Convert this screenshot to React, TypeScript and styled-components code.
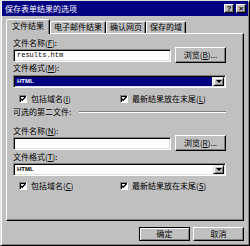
import React from 'react';
import styled, { createGlobalStyle } from 'styled-components';

const GlobalStyle = createGlobalStyle`
  html, body {
    margin: 0;
    padding: 0;
    background: #c0c0c0;
  }
  body {
    font-family: "Noto Sans CJK SC", "Liberation Sans", sans-serif;
    font-size: 8px;
    color: #000;
  }
`;

const Window = styled.div`
  width: 250px;
  height: 246px;
  box-sizing: border-box;
  background: #c0c0c0;
  border: 1px solid;
  border-color: #dfdfdf #000 #000 #dfdfdf;
  box-shadow: inset 1px 1px #fff, inset -1px -1px #808080;
  padding: 0 1px 2px 1px;
  display: flex;
  flex-direction: column;
`;

const TitleBar = styled.div`
  height: 15px;
  background: #000080;
  color: #fff;
  display: flex;
  align-items: center;
  padding: 0 2px 0 3px;
  line-height: 10px;
`;

const TitleText = styled.span`
  flex: 1;
`;

const TitleButton = styled.div`
  width: 10px;
  height: 9px;
  box-sizing: border-box;
  background: #c0c0c0;
  border: 1px solid;
  border-color: #fff #000 #000 #fff;
  box-shadow: inset -1px -1px #808080;
  margin-left: 2px;
  display: flex;
  align-items: center;
  justify-content: center;
  color: #000;
  font-family: "Liberation Sans", sans-serif;
  font-weight: bold;
  font-size: 8px;
  line-height: 7px;
`;

const Content = styled.div`
  padding: 3px 4px 0 4px;
  display: flex;
  flex-direction: column;
`;

const TabRow = styled.div`
  display: flex;
  align-items: flex-end;
  height: 14px;
  position: relative;
  z-index: 1;
`;

const Tab = styled.div<{ $active?: boolean }>`
  box-sizing: border-box;
  height: ${({ $active }) => ($active ? '15px' : '12px')};
  margin-bottom: ${({ $active }) => ($active ? '-1px' : '0')};
  padding: 0 ${({ $active }) => ($active ? '5px' : '3px')};
  padding-top: ${({ $active }) => ($active ? '1px' : '0')};
  background: #c0c0c0;
  border: 1px solid;
  border-bottom: none;
  border-color: #fff #000 transparent #fff;
  border-radius: 2px 2px 0 0;
  box-shadow: inset -1px 0 #808080;
  line-height: 10px;
  white-space: nowrap;
`;

const Panel = styled.div`
  height: 188px;
  box-sizing: border-box;
  border: 1px solid;
  border-color: #fff #000 #000 #fff;
  box-shadow: inset -1px -1px #808080;
  padding: 0 17px 0 6px;
  display: flex;
  flex-direction: column;
`;

const Label = styled.div<{ $top: number }>`
  margin-top: ${({ $top }) => $top}px;
  height: 10px;
  line-height: 10px;
  white-space: nowrap;
`;

const FieldRow = styled.div<{ $top: number }>`
  margin-top: ${({ $top }) => $top}px;
  height: 16px;
  display: flex;
  align-items: center;
  gap: 4px;
`;

const TextInput = styled.div`
  flex: 1;
  height: 13px;
  box-sizing: border-box;
  background: #fff;
  border: 1px solid;
  border-color: #808080 #fff #fff #808080;
  box-shadow: inset 1px 1px #000, inset -1px -1px #dfdfdf;
  padding: 0 3px;
  line-height: 11px;
  font-family: "Liberation Mono", monospace;
  font-size: 7px;
`;

const Button = styled.div<{ $default?: boolean; $short?: boolean }>`
  width: 51px;
  height: ${({ $short }) => ($short ? '14px' : '16px')};
  box-sizing: border-box;
  background: #c0c0c0;
  border: 1px solid;
  border-color: ${({ $default }) => ($default ? '#000' : '#fff #000 #000 #fff')};
  box-shadow: ${({ $default }) =>
    $default
      ? 'inset 1px 1px #fff, inset -1px -1px #808080'
      : 'inset -1px -1px #808080'};
  display: flex;
  align-items: center;
  justify-content: center;
  line-height: 10px;
  white-space: nowrap;
`;

const Select = styled.div<{ $top: number }>`
  margin-top: ${({ $top }) => $top}px;
  height: 13px;
  box-sizing: border-box;
  background: #fff;
  border: 1px solid;
  border-color: #808080 #fff #fff #808080;
  box-shadow: inset 1px 1px #000, inset -1px -1px #dfdfdf;
  padding: 1px;
  display: flex;
`;

const SelectValue = styled.div<{ $focused?: boolean }>`
  flex: 1;
  margin-right: 1px;
  background: ${({ $focused }) => ($focused ? '#000080' : 'transparent')};
  color: ${({ $focused }) => ($focused ? '#fff' : '#000')};
  padding-left: 2px;
  line-height: 9px;
  font-family: "Liberation Sans", sans-serif;
  font-size: 6px;
  font-weight: bold;
`;

const DropButton = styled.div`
  width: 11px;
  box-sizing: border-box;
  background: #c0c0c0;
  border: 1px solid;
  border-color: #dfdfdf #000 #000 #dfdfdf;
  box-shadow: inset 1px 1px #fff, inset -1px -1px #808080;
  display: flex;
  align-items: center;
  justify-content: center;
`;

const Arrow = styled.div`
  width: 0;
  height: 0;
  border-left: 3px solid transparent;
  border-right: 3px solid transparent;
  border-top: 3px solid #000;
`;

const CheckRow = styled.div<{ $top: number }>`
  margin-top: ${({ $top }) => $top}px;
  height: 14px;
  padding-left: 6px;
  display: grid;
  grid-template-columns: 101px 1fr;
  align-items: center;
`;

const CheckItem = styled.div`
  display: flex;
  align-items: center;
  gap: 4px;
  line-height: 10px;
  white-space: nowrap;
`;

const CheckBox = styled.div`
  width: 8px;
  height: 8px;
  box-sizing: border-box;
  background: #fff;
  border: 1px solid;
  border-color: #808080 #fff #fff #808080;
  box-shadow: inset 1px 1px #000;
  display: flex;
  align-items: center;
  justify-content: center;
`;

const Separator = styled.div`
  height: 12px;
  display: flex;
  align-items: center;
  line-height: 10px;
  white-space: nowrap;
`;

const Groove = styled.div`
  flex: 1;
  margin-left: 8px;
  border-top: 1px solid #808080;
  border-bottom: 1px solid #fff;
`;

const Footer = styled.div`
  margin-top: 6px;
  display: flex;
  justify-content: flex-end;
  gap: 3px;
`;

const Check = () => (
  <CheckBox>
    <svg width="6" height="6" viewBox="0 0 6 6">
      <path d="M0.5 2.5 L2.2 4.2 L5.5 0.8" stroke="#000" strokeWidth="1.3" fill="none" />
    </svg>
  </CheckBox>
);

const Option = ({ children }: { children: React.ReactNode }) => (
  <CheckItem>
    <Check />
    <span>{children}</span>
  </CheckItem>
);

const SelectBox = ({ top, focused }: { top: number; focused?: boolean }) => (
  <Select $top={top}>
    <SelectValue $focused={focused}>HTML</SelectValue>
    <DropButton>
      <Arrow />
    </DropButton>
  </Select>
);

export default function App() {
  return (
    <>
      <GlobalStyle />
      <Window>
        <TitleBar>
          <TitleText>保存表单结果的选项</TitleText>
          <TitleButton>?</TitleButton>
          <TitleButton>×</TitleButton>
        </TitleBar>
        <Content>
          <TabRow>
            <Tab $active>文件结果</Tab>
            <Tab>电子邮件结果</Tab>
            <Tab>确认网页</Tab>
            <Tab>保存的域</Tab>
          </TabRow>
          <Panel>
            <Label $top={4}>
              文件名称(<u>F</u>):
            </Label>
            <FieldRow $top={-1}>
              <TextInput>results.htm</TextInput>
              <Button>
                浏览(<u>B</u>)...
              </Button>
            </FieldRow>
            <Label $top={0}>
              文件格式(<u>M</u>):
            </Label>
            <SelectBox top={2} focused />
            <CheckRow $top={4}>
              <Option>
                包括域名(<u>I</u>)
              </Option>
              <Option>
                最新结果放在末尾(<u>L</u>)
              </Option>
            </CheckRow>
            <Separator>
              可选的第二文件:
              <Groove />
            </Separator>
            <Label $top={8}>
              文件名称(<u>N</u>):
            </Label>
            <FieldRow $top={-1}>
              <TextInput />
              <Button>
                浏览(<u>R</u>)...
              </Button>
            </FieldRow>
            <Label $top={1}>
              文件格式(<u>T</u>):
            </Label>
            <SelectBox top={1} />
            <CheckRow $top={3}>
              <Option>
                包括域名(<u>C</u>)
              </Option>
              <Option>
                最新结果放在末尾(<u>S</u>)
              </Option>
            </CheckRow>
          </Panel>
          <Footer>
            <Button $default $short>
              确定
            </Button>
            <Button $short>取消</Button>
          </Footer>
        </Content>
      </Window>
    </>
  );
}
